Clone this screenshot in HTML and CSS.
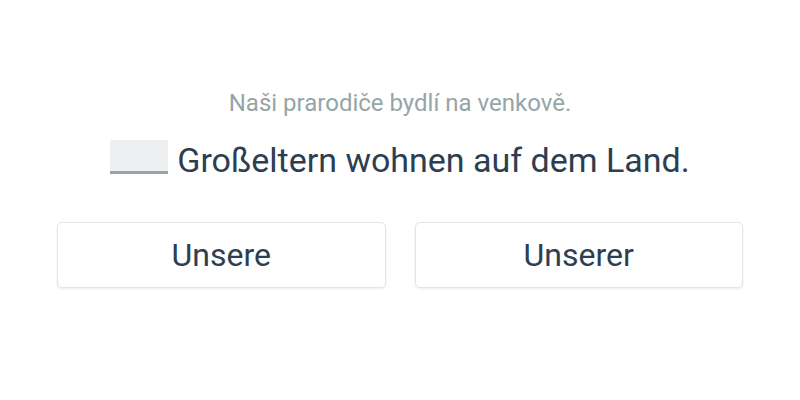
FILE: index.html
```html
<!DOCTYPE html>
<html lang="cs">
  <head>
    <meta charset="UTF-8" />
    <meta name="viewport" content="width=device-width, initial-scale=1.0" />
    <title>Cvičení</title>
    <link rel="stylesheet" href="styles.css">
  </head>
  <body>
    <div class="exercise">
      <p class="hint">Naši prarodiče bydlí na venkově.</p>
      <p class="sentence"><span class="blank"></span> Großeltern wohnen auf dem Land.</p>
      <div class="choices">
        <button class="choice">Unsere</button>
        <button class="choice">Unserer</button>
      </div>
    </div>
  </body>
</html>
```

FILE: styles.css
```css
* {
  margin: 0;
  padding: 0;
  box-sizing: border-box;
  font-family: Roboto, "Liberation Sans", sans-serif;
}

body {
  background-color: #fff;
  height: 400px;
}

.exercise {
  width: 686px;
  margin: 0 auto;
  padding-top: 89px;
  display: flex;
  flex-direction: column;
  align-items: center;
}

.hint {
  color: #95a5a6;
  font-size: 24px;
  line-height: 28px;
}

.sentence {
  margin-top: 23px;
  color: #2c3e50;
  font-size: 34px;
  line-height: 40px;
  display: flex;
  align-items: flex-start;
  gap: 9px;
}

.blank {
  display: inline-block;
  width: 58px;
  height: 34px;
  background-color: #edeff1;
  border-bottom: 3px solid #95a5a6;
}

.choices {
  width: 100%;
  margin-top: 42px;
  display: grid;
  grid-template-columns: 1fr 1fr;
  gap: 29px;
}

.choice {
  height: 66px;
  background: #fff;
  border: 1px solid #e3e6e8;
  border-radius: 5px;
  box-shadow: 0 1px 3px rgba(0, 0, 0, 0.08);
  color: #2c3e50;
  font-size: 32px;
  cursor: pointer;
}
```
